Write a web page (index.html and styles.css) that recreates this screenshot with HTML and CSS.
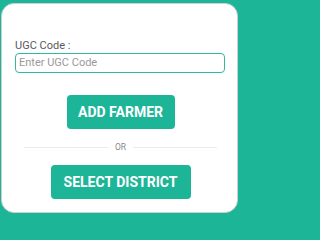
FILE: index.html
```html
<!DOCTYPE html>
<html>
<head>
<meta charset="utf-8">
<link rel="stylesheet" href="styles.css">
</head>
<body>
<div class="card">
  <label class="label">UGC Code :</label>
  <div class="input">Enter UGC Code</div>
  <div class="btn btn-add">ADD FARMER</div>
  <div class="or-row"><span class="line"></span><span class="or">OR</span><span class="line"></span></div>
  <div class="btn btn-district">SELECT DISTRICT</div>
</div>
</body>
</html>
```
FILE: styles.css
```css
html, body {
  margin: 0;
  padding: 0;
}
body {
  background: #1db598;
  width: 239px;
  height: 215px;
  overflow: hidden;
  font-family: Roboto, "Noto Sans", sans-serif;
}
.card {
  box-sizing: border-box;
  margin: 3px 1px 0 1px;
  height: 210px;
  background: #fff;
  border: 1px solid #cfcfcf;
  border-radius: 13px;
  padding: 35px 12px 0 13px;
  display: flex;
  flex-direction: column;
  align-items: stretch;
}
.label {
  font-size: 11px;
  line-height: 13px;
  color: #5a5a5a;
  margin-bottom: 1px;
}
.input {
  box-sizing: border-box;
  height: 20px;
  border: 1.5px solid #33b89f;
  border-radius: 4px;
  font-size: 11px;
  line-height: 17px;
  color: #9a9a9a;
  padding-left: 3px;
}
.btn {
  align-self: center;
  box-sizing: border-box;
  height: 34px;
  background: #1db598;
  color: #fff;
  font-weight: bold;
  font-size: 14px;
  line-height: 34px;
  text-align: center;
  border-radius: 4px;
  margin-left: 1px;
}
.btn-add {
  width: 108px;
  margin-top: 22px;
}
.or-row {
  display: flex;
  align-items: center;
  margin: 12px 8px 12px 9px;
  height: 12px;
}
.line {
  flex: 1;
  height: 1px;
  background: #ebebeb;
}
.or {
  font-size: 8.5px;
  color: #888;
  padding: 0 7px;
}
.btn-district {
  width: 140px;
}
```
